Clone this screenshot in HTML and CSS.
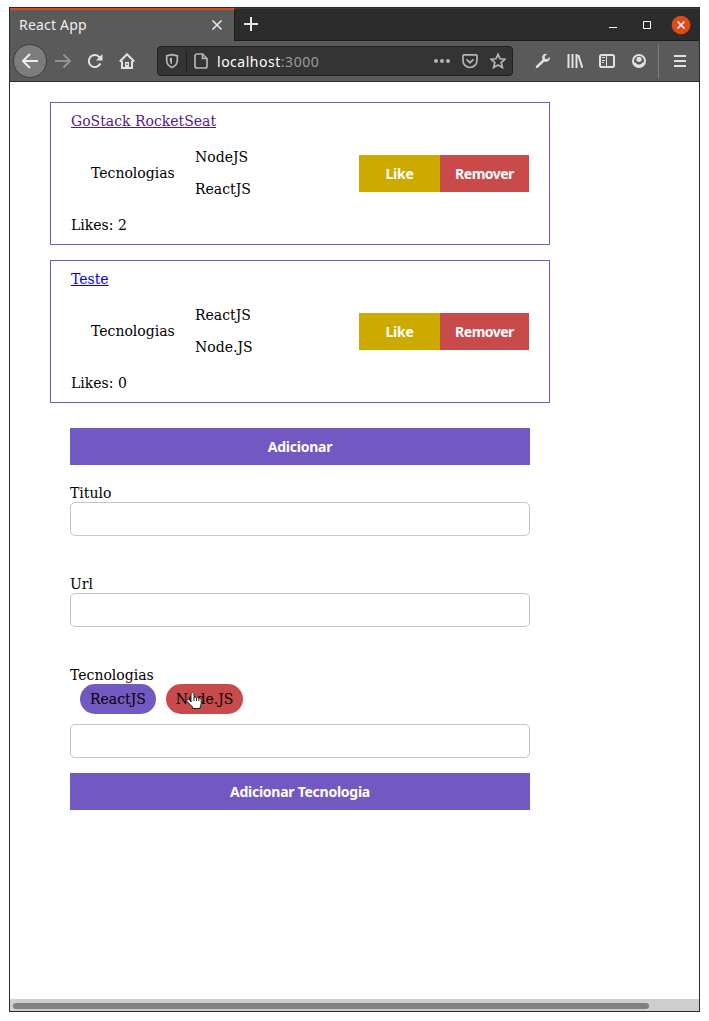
FILE: index.html
```html
<!DOCTYPE html>
<html lang="pt">
<head>
<meta charset="utf-8">
<title>React App</title>
<link rel="stylesheet" href="styles.css">
</head>
<body>
<div class="window">
  <header class="tabs">
    <div class="tab">
      <span class="tab-title">React App</span>
      <svg class="tab-close" width="16" height="16" viewBox="0 0 16 16"><path d="M3.500 3.500l9 9M12.500 3.500l-9 9"/></svg>
    </div>
    <svg class="new-tab" width="16" height="16" viewBox="0 0 16 16"><path d="M8 1v14M1 8h14"/></svg>
    <div class="controls">
      <svg width="8" height="16" viewBox="0 0 8 16"><path d="M0 10.500h8"/></svg>
      <svg width="8" height="16" viewBox="0 0 8 16"><path d="M.5 4.500h7v7h-7z"/></svg>
      <svg width="20" height="20" viewBox="0 0 20 20"><circle cx="10" cy="10" r="9.300"/><path d="M6.500 6.500l7 7M13.500 6.500l-7 7"/></svg>
    </div>
  </header>
  <nav class="toolbar">
    <span class="back"><svg class="icon" viewBox="0 0 16 16"><path d="M16 8H1.500M8 1L1 8l7 7"/></svg></span>
    <span class="cell dim"><svg class="icon" viewBox="0 0 16 16"><path d="M0 8H15M8.500 1.500L15 8l-6.500 6.500"/></svg></span>
    <span class="cell"><svg class="icon" viewBox="0 0 16 16"><path d="M13.300 10.500A6 6 0 1 1 12 3.800l1.500 1.700"/><path class="fill" d="M15.500 1v6.500H9z"/></svg></span>
    <span class="cell"><svg class="icon" viewBox="0 0 16 16"><path d="M.8 8.500L8 1.300l7.200 7.200M3 8v7h10V8"/><path class="fill" d="M6 9h4v6.500H6z"/><path class="hole" d="M8 10.500v1.500"/></svg></span>
    <div class="urlbar">
      <svg class="icon shield" viewBox="0 0 16 16"><path d="M8 1.600l5.300 1.200v4.700c0 3.500-2 5.600-5.300 7-3.300-1.400-5.300-3.500-5.300-7V2.800z"/><path class="fill" d="M8 4.500v7c-1.500-1-2.200-2.300-2.200-4.500V5z"/></svg>
      <span class="url-divider"></span>
      <svg class="icon page" viewBox="0 0 16 16"><path d="M4 1h5.500L14 5.500V13a2 2 0 0 1-2 2H4a2 2 0 0 1-2-2V3a2 2 0 0 1 2-2z"/><path d="M9.500 1v4.500H14"/></svg>
      <span class="url">localhost<span class="port">:3000</span></span>
      <svg class="icon" viewBox="0 0 16 16"><path class="fill" d="M0 8a2 2 0 0 1 4 0 2 2 0 0 1-4 0M6 8a2 2 0 0 1 4 0 2 2 0 0 1-4 0M12 8a2 2 0 0 1 4 0 2 2 0 0 1-4 0"/></svg>
      <svg class="icon" viewBox="0 0 16 16"><path d="M2 1.800h12a1 1 0 0 1 1 1v4.700a7 7 0 0 1-14 0V2.800a1 1 0 0 1 1-1z"/><path d="M4.500 6.300L8 9.700l3.500-3.400"/></svg>
      <svg class="icon" viewBox="0 0 16 16"><path d="M8 1.200l2 4.600 5 .4-3.800 3.300 1.200 5L8 11.900l-4.400 2.600 1.200-5L1 6.200l5-.4z"/></svg>
    </div>
    <span class="cell"><svg class="icon" viewBox="0 0 16 16"><path class="fill" d="M14.800 3.900L12.200 6.200 10 5.800l-.4-2.200L12 1C9.500.4 7 2 7.200 4.700L7.500 6.700 1 13c-.9 1.200.6 2.700 1.800 1.800L9.400 8.500c3 .8 6.100-1.200 5.400-4.600z"/></svg></span>
    <span class="cell"><svg class="icon" viewBox="0 0 16 16"><path d="M1.500 1v14M5.500 1v14M9.500 1v14M11.300 2l4 12.700"/></svg></span>
    <span class="cell"><svg class="icon" viewBox="0 0 16 16"><rect x="1" y="2" width="14" height="12" rx="1.800"/><path class="thin" d="M7.500 2v12M3 4.500h3M3 7.500h3M3 9.500h2"/></svg></span>
    <span class="cell"><svg class="icon" viewBox="0 0 16 16"><circle cx="8" cy="8" r="6"/><circle class="fill" cx="8" cy="6.300" r="2.600"/><path class="fill" d="M2.500 9.500h2c1 1.600 2.200 2 3.500 2s2.500-.4 3.500-2h2c-1 3.500-3 5-5.500 5s-4.500-1.500-5.500-5z"/></svg></span>
    <span class="divider"></span>
    <span class="cell"><svg class="icon" viewBox="0 0 16 16"><path d="M2 3h12M2 8h12M2 13h12"/></svg></span>
  </nav>
  <main class="content">
    <section class="card">
      <a class="link visited" href="#">GoStack RocketSeat</a>
      <div class="row">
        <span class="label">Tecnologias</span>
        <ul class="techs"><li>NodeJS</li><li>ReactJS</li></ul>
        <button class="btn like">Like</button><button class="btn remove">Remover</button>
      </div>
      <p class="likes">Likes: 2</p>
    </section>
    <section class="card">
      <a class="link" href="#">Teste</a>
      <div class="row">
        <span class="label">Tecnologias</span>
        <ul class="techs"><li>ReactJS</li><li>Node.JS</li></ul>
        <button class="btn like">Like</button><button class="btn remove">Remover</button>
      </div>
      <p class="likes">Likes: 0</p>
    </section>
    <form class="form">
      <button class="btn add" type="button">Adicionar</button>
      <label class="field">Titulo<input class="input"></label>
      <label class="field">Url<input class="input"></label>
      <div class="field-tech">Tecnologias
        <div class="tags">
          <span class="tag">ReactJS</span>
          <span class="tag hover">Node.JS<svg class="cursor" width="20" height="20" viewBox="0 0 20 20"><path d="M6 11V3c0-2.200 3-2.200 3 0v3.500c.8-.8 2.200-.6 2.500.3.700-.7 2.100-.4 2.400.6.800-.6 2.300-.1 2.300 1.300v3.800c0 1.500-1 2.300-1 3.500v1.500H7.500V16L2.300 10.600c-1.300-1.800.8-3.300 2.200-1.800z"/><path class="knuckle" d="M9 6.500v3.500M11.500 7v3M13.900 7.500v2.500"/></svg></span>
        </div>
      </div>
      <input class="input tech-input" aria-label="Tecnologia">
      <button class="btn add add-tech" type="button">Adicionar Tecnologia</button>
    </form>
  </main>
  <div class="scroll"><div class="thumb"></div></div>
</div>
</body>
</html>
```
FILE: styles.css
```css
* { box-sizing: border-box; }
body { margin: 0; padding: 7px 9px; background: #fff; height: 1021px; overflow: hidden; font: 14px/16px "DejaVu Serif", serif; color: #000; }
.window { width: 691px; height: 1005px; border: 1px solid #2b2b2e; display: flex; flex-direction: column; }
svg { display: block; flex: none; fill: none; }

.tabs { height: 33px; background: #2c2c2c; border-top: 1px solid #3b3b3b; border-bottom: 1px solid #1c1c1c; display: flex; align-items: center; flex: none; }
.tab { width: 225px; height: 34px; margin: -1px 0 -2px; align-self: flex-start; background: #5a5a5a; border-top: 2px solid #dd4814; border-right: 1px solid #1c1c1c; display: flex; align-items: center; justify-content: space-between; padding: 0 9px 2px; }
.tab-title { font: 14px/18px "Noto Sans", sans-serif; color: #eee; letter-spacing: .2px; }
.tab-close { stroke: #e4e4e4; stroke-width: 1.7; }
.new-tab { margin: 0 0 2px 8px; stroke: #e6e6e6; stroke-width: 2; }
.controls { margin-left: auto; padding-right: 8px; display: flex; align-items: center; gap: 26px; stroke: #fff; }
.controls svg:last-child { margin-left: -6px; stroke-width: 1.6; }
.controls circle { fill: #e14a16; stroke: none; }

.toolbar { height: 41px; background: #5a5a5a; border-bottom: 1px solid #2c2c2c; display: flex; align-items: center; flex: none; padding: 0 3px; }
.icon { width: 16px; height: 16px; stroke: currentColor; stroke-width: 2; }
.fill { fill: currentColor; stroke: none; }
.thin { stroke-width: 1; }
.hole { stroke: #5a5a5a; stroke-width: 1.5; }
.back { width: 34px; height: 34px; border-radius: 50%; background: #7c7c7c; border: 1px solid #3e3e3e; color: #eee; display: flex; align-items: center; justify-content: center; }
.cell { width: 32px; display: flex; justify-content: center; color: #e2e2e2; }
.dim { color: #929292; }
.urlbar { width: 356px; height: 30px; margin: 0 14px; border: 1px solid #202020; border-radius: 4px; background: #343434; display: flex; align-items: center; color: #b4b4b4; padding-left: 6px; }
.urlbar .icon { stroke-width: 1.7; margin-right: 12px; }
.urlbar .icon:last-child { margin-right: 6px; }
.urlbar .shield { margin-right: 6px; }
.url-divider { width: 1px; height: 22px; background: #202020; }
.urlbar .page { margin: 0 8px 0 6px; }
.url { flex: 1; font: 14px/20px "Noto Sans", sans-serif; letter-spacing: .52px; color: #fff; padding-top: 1px; }
.port { color: #9a9a9a; }
.divider { width: 1px; height: 34px; margin: 0 5px 0 3px; background: #7c7c7c; }

.content { flex: 1; padding: 20px 40px; }
.card { width: 500px; height: 143px; margin-bottom: 15px; padding: 10px 20px 11px; border: 1px solid #7159c1; display: flex; flex-direction: column; }
.link { color: #00e; align-self: flex-start; }
.visited { color: #551a8b; }
.row { height: 88px; padding-left: 20px; display: flex; align-items: center; }
.label { width: 104px; }
.techs { width: 164px; margin: 0; padding: 0; list-style: none; line-height: 32px; }
.likes { margin: 0; }
.btn { height: 37px; border: 0; padding: 0; color: #fff; font: bold 14px/19px "Noto Sans", sans-serif; letter-spacing: -.26px; }
.like { width: 81px; background: #ccaa00; }
.remove { width: 89px; background: #c94a4a; letter-spacing: -.5px; }

.form { width: 460px; margin: 25px 20px 0; display: flex; flex-direction: column; }
.add { background: #7159c1; }
.field { margin-top: 20px; display: flex; flex-direction: column; gap: 1px; }
.field + .field { margin-top: 40px; }
.input { width: 460px; height: 34px; border: 1px solid #c8c4c0; border-radius: 5px; background: #fff; }
.field-tech { margin-top: 40px; }
.tags { display: flex; gap: 10px; padding: 1px 10px 10px; }
.tag { height: 30px; line-height: 30px; padding: 0 10px; border-radius: 15px; background: #7159c1; }
.hover { background: #c94a4a; position: relative; }
.cursor { position: absolute; left: 19px; top: 7px; fill: #fff; stroke: #222; stroke-width: 1; }
.knuckle { fill: none; }
.add-tech { margin-top: 15px; }

.scroll { height: 12px; padding: 0 3px; background: #cecece; border-top: 1px solid #d5d0cc; display: flex; align-items: center; flex: none; }
.thumb { width: 636px; height: 6px; border-radius: 3px; background: #7e8282; }
```
